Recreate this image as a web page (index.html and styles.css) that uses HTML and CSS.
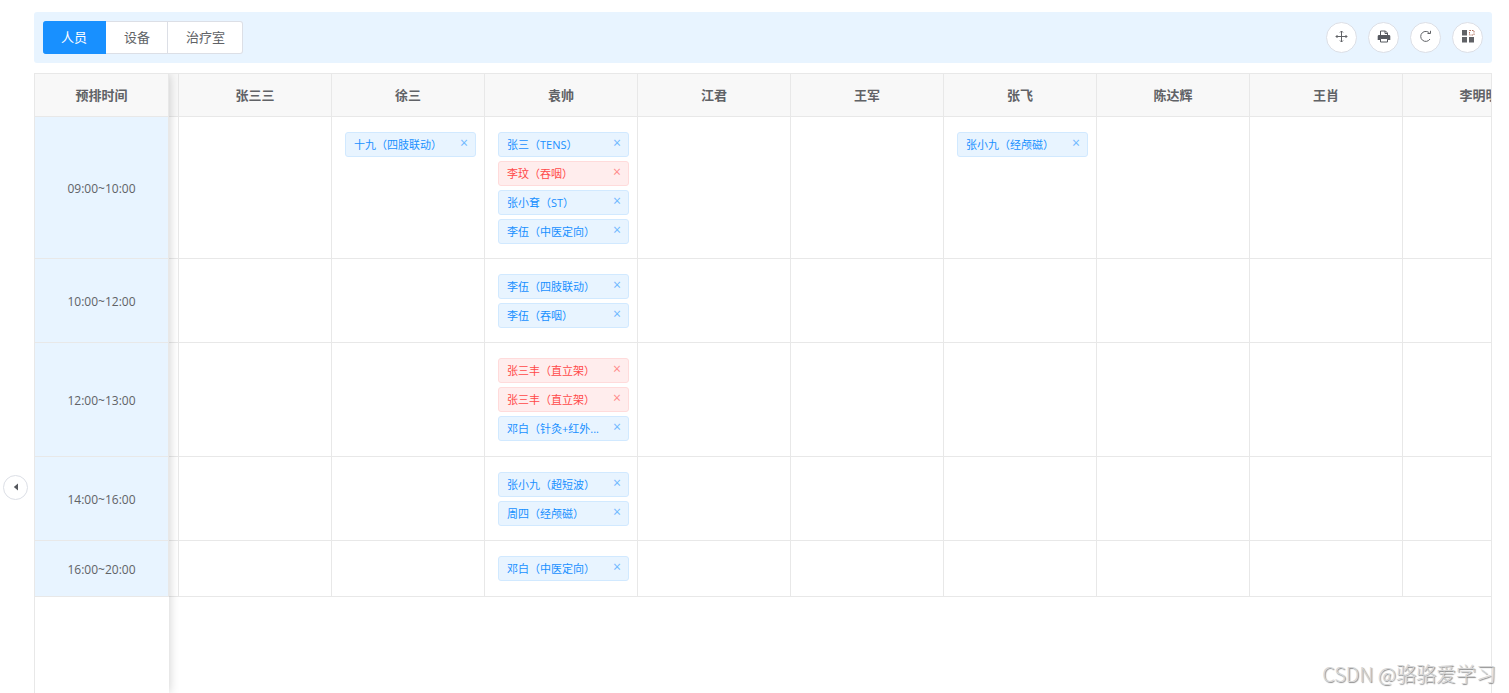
FILE: index.html
```html
<!DOCTYPE html>
<html lang="zh-CN">
<head>
<meta charset="utf-8">
<title>预排时间</title>
<link rel="stylesheet" href="styles.css">
</head>
<body>
<div class="page">
  <aside class="side">
    <button class="collapse" type="button" aria-label="收起">
      <svg width="6" height="8" viewBox="0 0 6 8"><path d="M5 .5v7L.8 4z" fill="#55585e"/></svg>
    </button>
  </aside>
  <main class="main">
    <header class="toolbar">
      <div class="tabs">
        <button class="tab active" type="button">人员</button>
        <button class="tab" type="button">设备</button>
        <button class="tab" type="button">治疗室</button>
      </div>
      <div class="tools">
        <button class="tool" type="button" aria-label="移动">
          <svg width="13" height="13" viewBox="0 0 13 13" fill="none" stroke="#606266"><path d="M6.500 1v11M1 6.500h11M5 2.500 6.500 1 8 2.500M5 10.500 6.500 12 8 10.500M2.500 5 1 6.500 2.500 8M10.500 5 12 6.500 10.500 8"/></svg>
        </button>
        <button class="tool" type="button" aria-label="打印">
          <svg width="14" height="13" viewBox="0 0 14 13"><path d="M3.500 5.500v-4.500h5l2 2v2.500" fill="none" stroke="#55585e"/><path d="M8 1v2.500h2.500" fill="none" stroke="#55585e"/><path d="M2 5h10a1.300 1.300 0 0 1 1.300 1.300V10H.7V6.300A1.300 1.300 0 0 1 2 5z" fill="#55585e"/><path d="M3.500 8.500v3.500h7V8.500z" fill="#fff" stroke="#55585e"/></svg>
        </button>
        <button class="tool" type="button" aria-label="刷新">
          <svg width="13" height="13" viewBox="0 0 13 13" fill="none" stroke="#606266"><path d="M10.800 3.500A5 5 0 1 0 11 9M8.500 3.500h3V.8"/></svg>
        </button>
        <button class="tool" type="button" aria-label="列设置">
          <svg width="14" height="13" viewBox="0 0 14 13"><path d="M1 0h5v5.500H1zM1 7h5v5.500H1zM8 7h5v5.500H8z" fill="#606266"/><path d="M8.500.500h4.500v4.500H8.500z" fill="none" stroke="#b0715f" stroke-dasharray="1.500 1"/></svg>
        </button>
      </div>
    </header>
    <section class="grid">
      <div class="fixed">
        <table class="times">
          <thead><tr><th>预排时间</th></tr></thead>
          <tbody>
            <tr class="slots-4"><td>09:00~10:00</td></tr>
            <tr class="slots-2"><td>10:00~12:00</td></tr>
            <tr class="slots-3"><td>12:00~13:00</td></tr>
            <tr class="slots-2"><td>14:00~16:00</td></tr>
            <tr class="slots-1"><td>16:00~20:00</td></tr>
          </tbody>
        </table>
      </div>
      <div class="scroller">
        <table class="schedule">
          <colgroup><col class="edge"><col span="9"></colgroup>
          <thead>
            <tr><th></th><th>张三三</th><th>徐三</th><th>袁帅</th><th>江君</th><th>王军</th><th>张飞</th><th>陈达辉</th><th>王肖</th><th>李明明</th></tr>
          </thead>
          <tbody>
            <tr class="slots-4">
              <td></td><td></td>
              <td><div class="tag"><span>十九（四肢联动）</span><button type="button" aria-label="删除"></button></div></td>
              <td>
                <div class="tag"><span>张三（TENS）</span><button type="button" aria-label="删除"></button></div>
                <div class="tag red"><span>李玟（吞咽）</span><button type="button" aria-label="删除"></button></div>
                <div class="tag"><span>张小耷（ST）</span><button type="button" aria-label="删除"></button></div>
                <div class="tag"><span>李伍（中医定向）</span><button type="button" aria-label="删除"></button></div>
              </td>
              <td></td><td></td>
              <td><div class="tag"><span>张小九（经颅磁）</span><button type="button" aria-label="删除"></button></div></td>
              <td></td><td></td><td></td>
            </tr>
            <tr class="slots-2">
              <td></td><td></td><td></td>
              <td>
                <div class="tag"><span>李伍（四肢联动）</span><button type="button" aria-label="删除"></button></div>
                <div class="tag"><span>李伍（吞咽）</span><button type="button" aria-label="删除"></button></div>
              </td>
              <td></td><td></td><td></td><td></td><td></td><td></td>
            </tr>
            <tr class="slots-3">
              <td></td><td></td><td></td>
              <td>
                <div class="tag red"><span>张三丰（直立架）</span><button type="button" aria-label="删除"></button></div>
                <div class="tag red"><span>张三丰（直立架）</span><button type="button" aria-label="删除"></button></div>
                <div class="tag"><span>邓白（针灸+红外...</span><button type="button" aria-label="删除"></button></div>
              </td>
              <td></td><td></td><td></td><td></td><td></td><td></td>
            </tr>
            <tr class="slots-2">
              <td></td><td></td><td></td>
              <td>
                <div class="tag"><span>张小九（超短波）</span><button type="button" aria-label="删除"></button></div>
                <div class="tag"><span>周四（经颅磁）</span><button type="button" aria-label="删除"></button></div>
              </td>
              <td></td><td></td><td></td><td></td><td></td><td></td>
            </tr>
            <tr class="slots-1">
              <td></td><td></td><td></td>
              <td><div class="tag"><span>邓白（中医定向）</span><button type="button" aria-label="删除"></button></div></td>
              <td></td><td></td><td></td><td></td><td></td><td></td>
            </tr>
          </tbody>
        </table>
      </div>
    </section>
  </main>
  <div class="watermark">CSDN @骆骆爱学习</div>
</div>
</body>
</html>
```
FILE: styles.css
```css
* { box-sizing: border-box; }
body {
  margin: 0;
  background: #fff;
  color: #606266;
  font-family: "Open Sans", "Noto Sans CJK SC", sans-serif;
  font-size: 13px;
}
button { font: inherit; color: inherit; padding: 0; cursor: pointer; }
.page { position: relative; display: flex; height: 100vh; overflow: hidden; }
.side { flex: 0 0 34px; padding: 475px 0 0 3px; }
.collapse {
  display: flex;
  align-items: center;
  justify-content: center;
  width: 25px;
  height: 25px;
  padding-bottom: 1px;
  border: 1px solid #dcdfe6;
  border-radius: 50%;
  background: #fff;
}
.main { flex: 1; min-width: 0; display: flex; flex-direction: column; gap: 10px; padding: 12px 17px 0 0; }
.toolbar {
  display: flex;
  align-items: center;
  justify-content: space-between;
  height: 51px;
  padding: 0 9px;
  border-radius: 3px;
  background: #e8f4ff;
}
.tabs { display: flex; }
.tab {
  height: 33px;
  padding: 0 17px 2px 18px;
  border: 1px solid #dcdfe6;
  border-left-width: 0;
  background: #fff;
  line-height: 20px;
}
.tab:last-child { border-radius: 0 3px 3px 0; }
.tab.active { padding-right: 18px; border-color: #1890ff; border-radius: 3px 0 0 3px; background: #1890ff; color: #fff; }
.tools { display: flex; gap: 11px; }
.tool {
  display: flex;
  align-items: center;
  justify-content: center;
  width: 31px;
  height: 31px;
  padding-bottom: 2px;
  border: 1px solid #dcdfe6;
  border-radius: 50%;
  background: #fff;
}
.grid {
  flex: 1;
  display: flex;
  min-height: 0;
  border: 1px solid #e8e8e8;
  border-bottom: 0;
  overflow: hidden;
}
.fixed { flex: 0 0 134px; z-index: 1; background: #fff; box-shadow: 0 0 10px rgba(0, 0, 0, .2); }
.scroller { flex: 1; min-width: 0; overflow: hidden; }
table { border-collapse: separate; border-spacing: 0; table-layout: fixed; }
.times { width: 100%; }
.schedule { width: 1387px; }
col { width: 153px; }
.edge { width: 10px; }
th, td { border: 0 solid #e8e8e8; border-width: 0 1px 1px 0; }
th { height: 43px; padding: 0 0 2px; background: #f8f8f8; color: #606266; font-weight: 700; white-space: nowrap; }
td { padding: 0 8px 0 13px; vertical-align: middle; }
.schedule td:first-child { padding: 0; }
.schedule .slots-4 td { vertical-align: top; padding-top: 15px; }
.times td { padding: 2px 0 0; background: #e8f4ff; font-size: 12px; text-align: center; }
.slots-1 td { height: 56px; }
.slots-2 td { height: 84px; }
.slots-3 td { height: 114px; }
.slots-4 td { height: 142px; }
.tag {
  display: flex;
  align-items: flex-start;
  justify-content: space-between;
  height: 25px;
  padding: 0 8px;
  border: 1px solid #d1e9ff;
  border-radius: 3px;
  background: #e8f4ff;
  color: #1890ff;
  font-size: 11px;
  line-height: 23px;
  white-space: nowrap;
}
.tag + .tag { margin-top: 4px; }
.tag.red { border-color: #ffdbdb; background: #ffeded; color: #ff4949; }
.tag button { width: 7px; height: 20px; border: 0; background: none; font-size: 14px; line-height: 20px; opacity: .6; }
.tag button::before { content: "×"; }
.watermark {
  position: absolute;
  right: 13px;
  bottom: 6px;
  z-index: 2;
  color: #d6d6d6;
  font-family: "Noto Sans CJK SC", sans-serif;
  font-size: 20px;
  font-weight: 300;
  line-height: 26px;
  text-shadow: 1px 1px 1px #888;
}
```
